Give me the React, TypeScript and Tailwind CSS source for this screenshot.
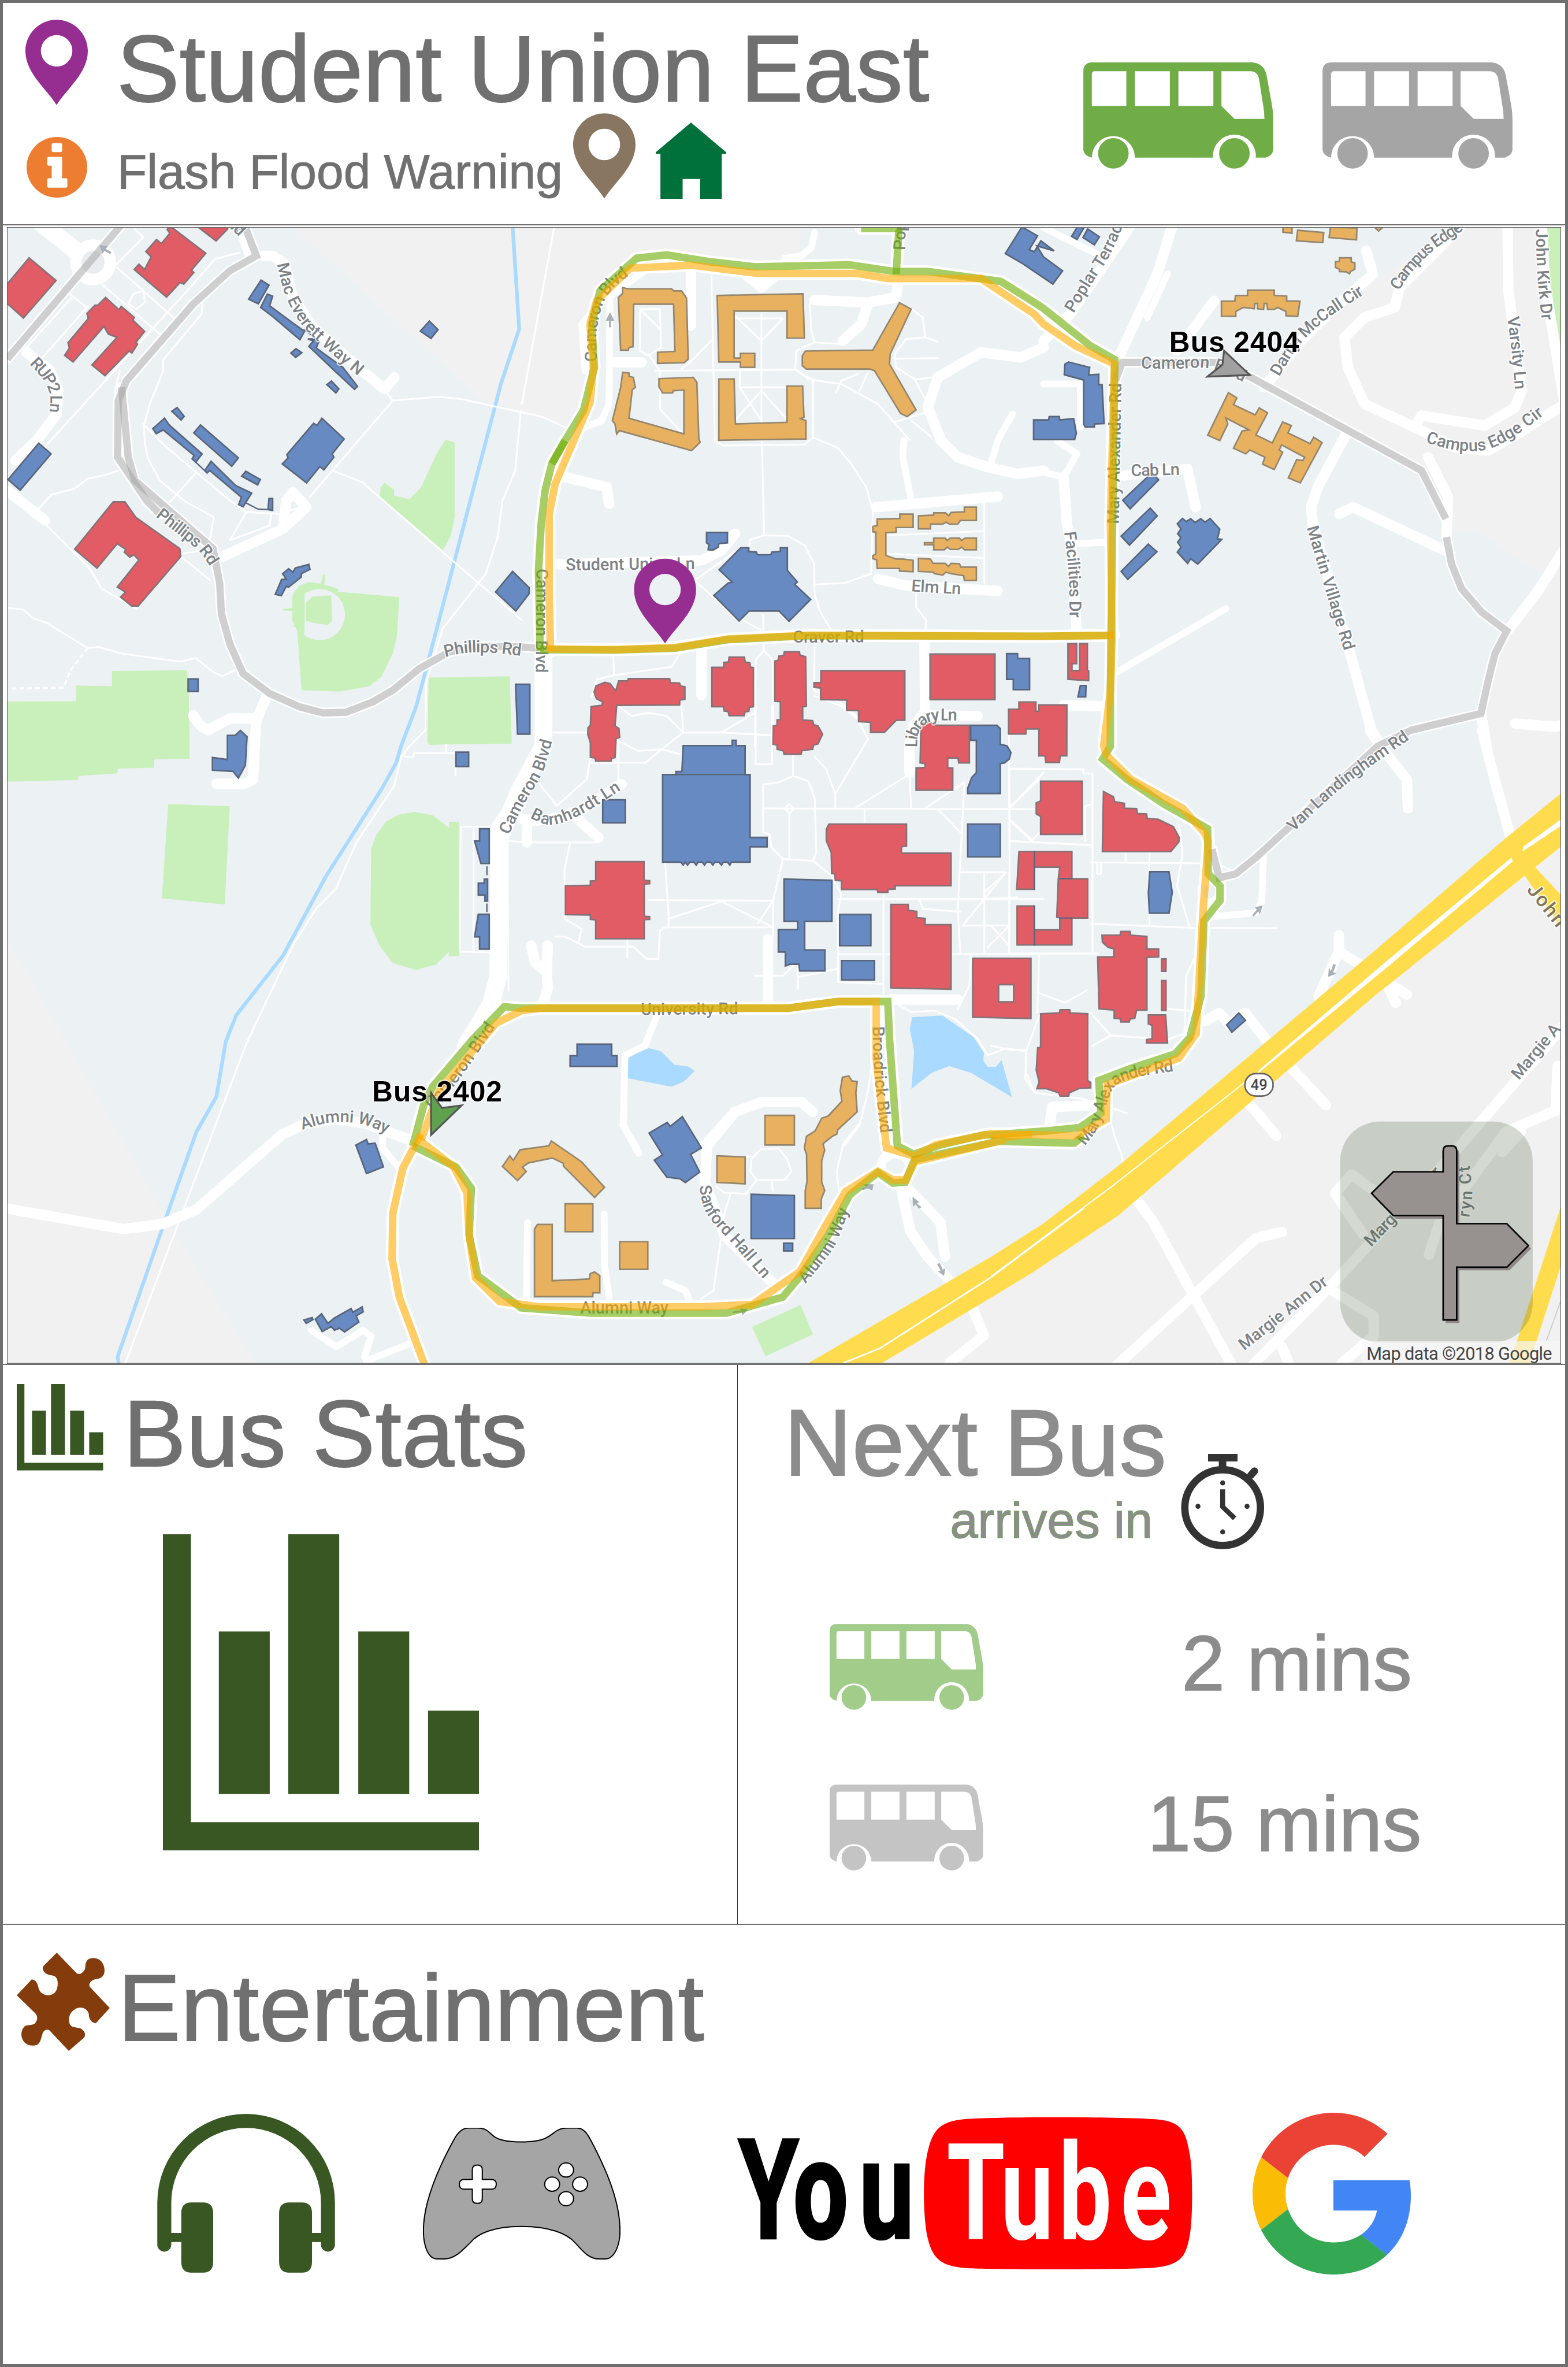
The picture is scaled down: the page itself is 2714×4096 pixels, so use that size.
import React from "react";

/* ---------- Map geometry helpers ---------- */

// Each survey sheet has its own origin and unit size on the map plane.
type Sheet = "A" | "B" | "C" | "D" | "E" | "F" | "G";
const SHEETS: Record<Sheet, [number, number, number, number]> = {
  A: [0, 430, 0.63776, 0.63776],
  B: [1000, 430, 0.63776, 0.63776],
  C: [2000, 430, 0.64094, 0.63776],
  D: [0, 1400, 0.63776, 0.78444],
  E: [1000, 1200, 0.63776, 0.63776],
  F: [1900, 1400, 0.70472, 0.78444],
  G: [700, 2000, 0.82908, 0.40816],
};

type Pt = [number, number];

// "B 10,20 30,40 C 5,6" -> points on the map plane; a letter switches sheet.
function toPoints(src: string): Pt[] {
  let s: Sheet = "A";
  const out: Pt[] = [];
  for (const tok of src.trim().split(/\s+/)) {
    if (tok in SHEETS) {
      s = tok as Sheet;
      continue;
    }
    const [x, y] = tok.split(",").map(Number);
    const [ox, oy, kx, ky] = SHEETS[s];
    out.push([ox + x * kx, oy + y * ky]);
  }
  return out;
}
const str = (src: string) =>
  toPoints(src)
    .map(([x, y]) => `${x.toFixed(1)},${y.toFixed(1)}`)
    .join(" ");

const Lines = ({ data, width, color, opacity = 1, join = "round" }: { data: string[]; width: number; color: string; opacity?: number; join?: "round" | "miter" }) => (
  <g fill="none" stroke={color} strokeWidth={width} strokeLinejoin={join} strokeLinecap={join === "round" ? "round" : "butt"}>
    {data.map((d, i) => (
      <polyline key={i} points={str(d)} strokeOpacity={opacity} />
    ))}
  </g>
);

const Areas = ({ data, fill, outline }: { data: string[]; fill: string; outline?: string }) => (
  <g fill={fill} stroke={outline ?? "none"} strokeWidth={outline ? 3 : 0}>
    {data.map((d, i) => (
      <polygon key={i} points={str(d)} />
    ))}
  </g>
);

// Smooth a polyline into a path so that street names bend gently.
function smooth(p: Pt[]) {
  let d = `M${p[0][0]} ${p[0][1]}`;
  for (let i = 0; i < p.length - 1; i++) {
    const a = p[i - 1] ?? p[i];
    const b = p[i];
    const c = p[i + 1];
    const e = p[i + 2] ?? c;
    d += `C${b[0] + (c[0] - a[0]) / 6} ${b[1] + (c[1] - a[1]) / 6} ${c[0] - (e[0] - b[0]) / 6} ${c[1] - (e[1] - b[1]) / 6} ${c[0]} ${c[1]}`;
  }
  return d;
}

/* ---------- Map data ---------- */

const OUTSIDE = [
  "B -688,9 -118,530 0,563 130,608 220,430 200,250 330,110 440,90 700,120 835,130 835,9",
  "D 21,510 530,1235 770,1548 21,1548",
  "C 1240,9 1000,160 830,300 670,490 1130,740 1205,900 1215,922 1300,922 1480,1045 1530,1065 1385,1225 1310,1470 1330,1568 1568,1568 1568,9",
  "F 1335,0 1415,270 350,1100 0,1310 -503,1548 1568,1548 1568,0",
];

const PARKS = [
  "A 1338,648 1366,654 1366,880 1355,935 1331,980 1141,818 1144,790 1155,777 1184,797 1184,815 1231,826 1265,790 1312,690",
  "A 877,1140 880,1110 900,1085 930,1075 964,1080 970,1052 977,1054 974,1083 1018,1096 1015,1104 1200,1120 1192,1240 1180,1290 1145,1360 1110,1388 1020,1404 906,1400 892,1210 883,1210 878,1162 850,1160 850,1156 878,1153",
  "A 21,1434 228,1433 228,1386 336,1388 336,1342 562,1340 567,1410 569,1568 21,1568",
  "D 21,0 569,0 569,69 463,71 463,91 354,93 352,105 235,111 235,121 21,125",
  "D 505,180 690,185 675,425 486,410",
  "A 1288,1362 1532,1358 1537,1560 1290,1564 1284,1555",
  "D 1284,0 1537,0 1537,32 1290,34",
  "D 1115,290 1130,255 1160,222 1200,205 1245,199 1300,207 1350,238 1348,223 1379,223 1379,551 1348,551 1348,541 1310,572 1250,585 1180,568 1140,525 1113,475",
  "C 1506,9 1547,9 1547,378 1538,378 1515,180",
  "G 1006,1227 1035,1365 925,1468 894,1330",
];
const WATER = [
  "E 320,1293 382,1268 418,1277 458,1318 500,1323 519,1337 487,1368 450,1384 317,1358",
  "E 1173,1175 1264,1170 1358,1235 1389,1283 1387,1306 1400,1324 1425,1324 1442,1304 1473,1415 1350,1342 1284,1322 1230,1343 1171,1391 1179,1277 1166,1210",
];
const CREEK = [
  "A 1540,5 1560,315 1505,480 1400,880 1290,1300 1250,1450 1205,1568 D 1190,80 1145,145 980,355 850,550 710,695 678,760 650,895 590,980 490,1210 353,1530 357,1548",
];

const PATHS = [
  "A 1150,490 1180,530 930,820", "A 1180,530 1320,518 1390,526 1568,565 B 60,578 130,610",
  "A 1565,560 1548,740 1510,830 1495,940 1460,1050 1330,1215 1280,1380 1278,1520 1230,1568 D 1205,65 1185,135 1070,275 1010,385 950,435 880,525 740,765 375,1548",
  "A 1003,742 1088,775 1440,1080 1568,1190", "A 720,85 645,105 580,180 70,740",
  "A 340,120 520,280", "A 300,175 480,330", "A 350,120 430,40 400,9", "A 210,210 260,250", "A 400,210 430,200 435,235 410,255 385,240 400,210",
  "A 610,225 605,270 490,408 490,440 450,540 432,605 435,660 445,705 480,770 555,832 642,880 630,950", "A 430,600 500,670 690,830 740,865 840,870 905,850",
  "A 590,745 510,835", "A 740,865 690,950 810,905 815,870", "A 355,740 320,752 262,765 222,795 155,812 110,860",
  "A 130,895 270,1035 305,1095 410,1155 545,990 640,975", "A 545,1000 632,1070", "A 21,1152 70,1158 98,1183 140,1198 262,1273 295,1270 365,1290 540,1314 588,1304 640,1345 668,1358 705,1340",
  "A 220,215 75,375", "A 265,245 110,420", "A 360,440 345,500 360,620",
  "B 97,9 0,540", "B 570,155 580,650 605,665 850,662 875,640 875,470", "B 720,270 720,580 728,935", "B 400,440 820,437 875,468 960,480 1070,540 1165,648",
  "B 875,640 950,672 990,720 1035,790 1055,860 1050,1050 970,1078 880,1082", "B 635,270 720,350 785,283 635,283", "B 655,440 655,490 820,490", "B 655,490 720,590", "B 720,500 640,590",
  "B 720,500 800,590", "B 355,255 415,255 418,370 380,395 355,380 355,255 418,318", "B 380,390 415,440 415,555 480,625", "B 480,435 500,420 575,345", "B 865,235 870,320 880,355 825,380 822,435 860,465",
  "B 880,355 960,360", "B 1165,250 1205,280 1213,340 1155,345 1120,390 1125,430 1180,465 1215,530", "B 1213,340 1250,353", "B 1125,404 1250,402", "B 1180,467 1230,460", "B 1040,445 1015,500", "B 945,505 960,470 1010,450", "B 1120,595 1230,560", "B 1170,590 1230,638",
  "B 728,935 685,948 683,975", "B 728,935 800,936 850,965 878,1020 880,1110 895,1160 930,1220", "B 640,985 520,1070 650,1190", "B 1390,840 1390,1080", "B 1100,935 1390,922", "B 1100,990 1390,1003",
  "B 1185,1110 1185,1150 1215,1190 1213,1225", "B 725,1175 727,1280 755,1310 755,1568", "B 727,1280 703,1310 700,1568", "B 275,1300 277,1355 225,1368 210,1420", "B 277,1355 450,1330 475,1290",
  "B 665,1190 720,1220", "B 880,1270 878,1400 960,1440 1035,1500",
  "E 95,320 195,320", "E 290,240 330,270 380,260 435,270 485,320 420,370 350,375 290,345", "E 485,320 480,240", "E 485,320 600,320 700,260", "E 600,320 750,328", "E 290,350 290,470", "E 372,410 420,370 475,385", "E 210,410 372,410",
  "E 703,240 703,415 752,415 752,240", "E 880,210 960,240 1010,280 1040,340 942,505 942,545", "E 880,392 915,430 942,505", "E 815,390 815,450 770,470 725,475 725,620 745,625 750,665 785,700", "E 815,450 860,465 880,515 885,680 875,705 785,700", "E 725,548 1568,550",
  "E 804,535 818,548 804,562 790,548 804,535", "E 804,562 804,700", "E 875,705 930,750 960,805 950,860 950,1070 1085,1075", "E 785,700 755,825 755,930", "E 755,825 710,893", "E 755,825 380,823", "E 440,880 600,827 755,905", "E 755,905 430,905 415,915 410,1000 375,1000 335,963 190,963 130,933 100,933",
  "E 430,700 442,880 440,905", "E 145,650 128,735 130,880 180,910 170,950", "E 0,650 225,650", "E 317,940 317,995", "E 950,820 1568,820", "E 950,986 1568,985", "E 1087,810 1087,1110", "E 1195,820 1205,850 1318,858", "E 1030,550 1030,590", "E 1005,545 1165,445 1170,545", "E 1215,545 1330,470 1310,850 1318,985", "E 1250,550 1318,620",
  "E 1318,740 1455,740 1325,900 1465,900", "E 1390,740 1390,985", "E 1390,800 1455,740", "E 1465,740 1465,985", "E 1410,900 1465,960", "E 1465,900 1400,965", "E 1465,430 1465,670", "E 1465,548 1568,440", "E 1465,430 1568,430", "E 1465,580 1530,640", "E 700,1050 785,1050 828,1010 830,1090", "E 830,1055 945,1030", "E 1085,1110 1170,1160 1240,1155 1300,1180 1370,1240 1400,1290 1455,1268 1510,1277", "E 1350,990 1345,1080 1310,1150", "E 1555,1170 1515,1280 1515,1340 1540,1400", "E 1055,1300 1040,1400 1015,1500 970,1560", "E 50,470 105,540 195,460 205,400",
  "F 48,0 48,110 50,270 270,280", "F 48,93 250,95 250,105 275,105 275,540", "F 48,190 130,120", "F 50,220 110,270 130,250", "F 0,410 70,408", "F 50,270 48,545 290,545", "F 130,545 125,690", "F 270,322 610,325 650,340", "F 270,472 545,482 775,483", "F 255,270 255,185 275,180", "F 430,300 430,345", "F 430,450 430,475", "F 365,300 365,322", "F 510,230 520,300 505,380 540,480", "F 288,325 288,350 298,350 298,325", "F 125,640 200,665 260,635", "F 270,690 325,745 480,755 525,740 530,600 550,560", "F 275,770 325,745", "F 95,780 92,850 120,885 250,900 370,935", "F 320,940 335,990 355,1040 362,1075", "F 480,680 540,685", "F 0,770 50,780 95,780",
  "D 1385,235 1470,235", "D 1384,235 1382,540 1470,542", "D 1423,235 1423,540", "D 1205,62 1240,66 1245,55 1370,55 1368,110", "D 1340,35 1340,55", "D 1525,270 1568,272", "D 1525,270 1528,635",
  "G 915,495 955,492 975,540 985,600 970,640 905,640 890,600 893,540 915,495", "G 893,530 880,530", "G 845,700 830,800 805,1160 775,1200", "G 940,650 942,690", "G 905,640 880,705 830,700 810,670", "G 1095,690 1090,600 1105,470 1140,380",
];

const NARROW = [
  "B 265,200 262,540 240,590 190,610", "B 370,140 230,240 180,300 190,440", "C 310,280 370,150", "C 0,480 110,480 110,610", "C 100,960 190,955", "C 220,1345 545,1155", "F 740,310 735,420 720,445 600,455",
  "C 0,745 60,760 100,690 40,650", "B 1475,570 1430,650 1410,720", "B 1148,650 1145,700 1170,830", "B 880,25 870,70 840,95 790,102", "E 410,1160 370,1260 310,1290 305,1500 345,1568 G 595,380 632,515",
  "G 375,840 372,1220", "G 552,800 553,1040 565,1210", "G 695,1120 740,1160 750,1210", "D 1150,990 1150,1020 1200,1070", "D 935,1465 1010,1505 1090,1465 1115,1480 1095,1530", "D 1240,1495 1100,1540", "C 0,10 160,90", "E 1165,440 1170,300 1212,250",
];

const ROADS = [
  "A 80,385 150,440 175,500 170,570 110,650 45,710", "A 21,800 135,890", "A 720,9 750,90", "A 790,95 820,95 855,120 880,220 940,310 1100,450 1155,495 1185,460",
  "A 665,1000 850,915 920,850 880,805 860,830 850,910", "A 580,1475 600,1505 625,1520 690,1485 770,1485 765,1568 D 760,120 735,130 650,130", "A 770,1490 800,1420",
  "D 21,1168 370,1218 490,1205 590,1170 850,985 920,960 1010,950 1100,960 1230,1000",
  "B 280,415 360,415", "B 508,140 508,305", "B 130,760 255,790 262,840", "B 110,1022 540,1010 600,980 640,930", "B 880,228 1040,235 1125,220 1130,180", "B 1040,240 1020,300 965,350",
  "B 1568,370 1500,400 1380,385 1250,460 1220,550 1260,650 1310,700 1400,730 1490,750 1568,740", "B 1065,850 1430,818", "B 1070,1065 1150,1085 1430,1102", "B 540,1280 540,1415", "B 1210,1250 1212,1460", "B 1212,1475 1370,1478", "B 660,140 720,190 780,140",
  "C 385,5 340,150 225,400", "C 260,5 80,270 0,350", "C 510,230 400,380", "C 660,490 770,350 850,270 985,150 965,80", "C 1245,10 1065,190 1050,250 960,280 900,340 910,430 960,540 1110,610 1230,670 1330,680 1400,640 1568,535",
  "C 1110,610 1130,575 1320,605 1410,550 1430,500 1390,200 1388,5", "C 1490,5 1500,180 1568,600", "C 905,630 820,790 800,850 805,900 920,1300 980,1520 1010,1568", "C 885,870 925,850 1200,980",
  "C 240,755 430,735 455,850", "C 60,760 70,900 85,980 100,1240", "C 60,1445 180,1448", "C 1385,1225 1480,1100 1568,960", "C 1310,1480 1325,1568", "C 1410,1500 1530,1510 1568,1500", "C 1150,700 1210,820 1205,940",
  "F 1335,0 1360,90 1415,270", "F 1030,0 1060,40 1130,120 1133,190", "F 945,500 945,540 890,650", "F 945,540 1000,570 1130,645", "F 1060,590 1100,665", "F 580,710 620,690 650,720 690,690 760,770 910,915", "F 690,900 775,990", "F 390,1140 440,1200 660,1560",
  "F 330,1560 720,1240 790,1225", "F 700,1560 930,1350 1250,1040 1568,710", "F 1190,1280 1220,1200 1400,980 1568,915", "F 1110,1170 980,1085 935,1130 1010,1230", "F 1390,1030 1440,980", "F 1535,930 1540,820", "F 930,1370 1040,1430 1040,1480 950,1548", "F 790,1505 810,1548", "F 155,990 165,920 290,915",
  "E 150,560 190,600 230,635", "E 740,940 740,1130", "E 1110,1122 1310,1122", "E 28,960 40,1010 75,1040 78,960", "E 75,1040 78,1090 65,1130", "E 550,1560 640,1460 720,1430 840,1430 875,1460", "E -20,575 40,585 150,570 300,475", "E 15,590 15,650", "E 1165,440 1165,350",
  "G 845,345 790,480 785,650 830,900 950,1140", "G 1235,640 1260,880 1300,1000 1400,1220 1430,1370 1350,1500", "G 1240,650 1330,840 1340,1000",
];
const WIDE = ["E 65,80 65,360 -10,500 -68,640", "D 1560,170 1500,240 1497,600 1475,670 1400,770", "A 90,-30 240,90"];

const GREY = [
  "A 370,-5 21,405",
  "A 735,5 770,95 690,140 580,240 380,470 355,530 353,700 440,830 480,870",
  "A 365,490 385,700 405,770 640,975 660,1080 665,1170 690,1260 730,1350 810,1410 900,1450 970,1468 1040,1466 1120,1435 1180,1400 1260,1335 1350,1285 1450,1268 1568,1270 B 80,1277",
  "C 215,470 235,415 520,415 620,460 1130,740 1203,885",
  "C 1205,940 1220,1020 1250,1095 1310,1165 1385,1222 1350,1290 1330,1370 1308,1470 1100,1520 1000,1568 F 720,310 665,350 620,360 600,290",
];

const GREEN = [
  "B 1020,13 1143,13", "B 1133,18 1125,150",
  "B 55,1283 50,1040 58,900 70,800 90,720 130,650 185,560 218,430 210,300 235,200 345,102 435,92 560,112 700,128 985,122 1120,142 1220,142 1440,172 1540,235 C 0,253 140,365 213,407 205,1000 200,1400 200,1568 F 303,70 370,120 470,180 540,215 588,240 590,350 622,380 622,415 578,465 570,650 540,750 500,790 380,825 292,855 298,935 240,970 150,978 0,988 G 1430,428 1330,475 1268,520 1230,480 E 1105,1240 1100,1128 950,1128 800,1148 0,1148 D 1515,675 1420,755 1300,870 1275,910 1240,1015",
  "F 250,990 225,1008 0,1003 G 1460,460 1270,545 1248,650 1220,655 1185,605 1120,710 1070,900 1010,1080 965,1190 835,1265 520,1265 360,1240 260,1090 240,900 245,680 210,580 110,480",
  "B 55,1278 280,1279 460,1274 620,1248 860,1236 C 0,1238 210,1235",
  "B 90,720 130,650",
];
const ORANGE = [
  "B 86,1283 82,1100 82,870 100,780 205,535 215,430 205,300 225,230 325,132 510,123 710,148 1010,148 1100,163 1380,163 1540,270 C 0,300 95,365 212,420 200,900 205,1240 200,1400 180,1568 F 313,60 380,120 520,190 580,250 590,270 575,450 557,740 510,800 315,865 312,950 230,990 0,985 G 1440,425 1320,475 1268,528 1205,490 E 1065,1300 1065,1128 950,1128 800,1148 60,1148 0,1155 D 1490,715 1320,880 1265,1000",
  "F 110,986 0,998 G 1480,450 1270,555 1250,640 1220,640 1185,600 1110,695 1060,870 1005,1070 895,1225 780,1235 400,1235 310,1210 255,1100 240,900 235,700 205,580 120,445",
  "B 75,1276 280,1278 460,1272 620,1246 860,1235 C 0,1238 210,1235",
  "D 1265,985 1210,1070 1180,1180 1178,1290 1200,1385 1275,1548",
];

const RED = [
  "A 87,101 168,169 70,282 21,238 21,180", "A 510,5 618,87 575,138 582,145 552,180 541,175 500,219 403,136 417,120 434,136 454,98 438,82 470,46 485,58 510,27 502,16", "A 590,5 680,9 684,14 649,50",
  "A 317,220 357,257 364,247 403,280 399,288 434,322 408,355 413,360 396,387 387,381 315,455 276,423 351,340 325,330 312,307 219,414 194,394 208,372 204,356 265,283 261,268 285,243 294,243",
  "A 340,834 375,834 407,880 540,975 543,998 415,1147 395,1147 362,1120 377,1105 352,1090 417,1009 402,993 390,1000 373,985 378,977 352,960 291,1033 224,976",
  "E 250,169 265,173 282,195 291,165 318,165 320,158 444,158 446,170 474,171 477,180 490,182 490,220 475,222 474,237 285,238 280,300 292,308 294,334 283,338 280,395 270,397 268,406 222,406 220,396 206,394 206,350 198,325 199,305 206,298 208,242 240,238 243,228 224,218 217,198 223,180",
  "E 623,93 669,93 671,108 685,110 687,123 696,125 696,242 684,244 682,256 671,258 668,269 623,269 620,257 608,255 606,242 571,242 571,124 607,124 607,109 621,108",
  "E 789,77 834,77 836,87 853,92 855,241 844,243 844,282 874,284 877,296 890,300 904,325 890,354 877,357 874,370 842,374 839,385 788,385 786,375 767,370 767,357 755,355 756,300 767,298 767,282 777,281 777,227 760,226 760,105 771,102 773,90 787,88",
  "E 899,134 1151,134 1151,283 1125,283 1090,319 1048,319 1048,289 1012,287 1012,254 976,253 976,222 898,221 898,186 878,184 878,170 899,170", "E 1227,84 1422,84 1422,221 1227,221",
  "E 1200,290 1242,290 1245,298 1345,298 1345,411 1313,411 1311,396 1280,396 1280,426 1295,426 1295,493 1185,493 1185,426 1212,425 1212,413 1197,411",
  "E 1494,228 1545,228 1545,256 1554,256 1554,237 1638,237 F 205,62 187,62 185,78 148,78 146,62 130,62 E 1554,390 1554,309 1515,309 1515,324 1463,324 1463,250 1494,250",
  "E 923,595 1156,595 1156,661 1141,663 1141,682 1290,682 1290,780 1122,780 1122,790 1100,791 1100,800 1070,800 1068,791 961,791 961,765 942,764 941,745 931,743 930,680 915,645 915,610",
  "E 222,708 367,708 367,764 384,765 384,774 368,775 368,872 384,873 384,881 368,882 368,939 222,939 222,883 206,881 206,868 131,867 131,780 206,779 206,766 222,765",
  "E 1109,836 1161,836 1162,854 1187,857 1187,876 1212,878 1212,897 1290,897 1290,1091 1109,1087",
  "F 134,124 247,124 247,254 134,254 134,210 122,204 122,177 134,172",
  "F 305,149 332,162 335,174 362,178 362,190 395,191 397,203 422,204 424,215 454,217 495,235 511,262 510,272 488,296 302,296",
  "F 75,296 219,296 219,362 262,362 262,458 219,458 219,524 70,524 70,429 117,429 117,487 186,487 186,458 178,456 182,362 186,334 117,334 117,388 69,388",
  "F 301,500 350,500 352,491 377,491 379,500 423,503 423,534 455,534 455,553 423,554 423,683 395,683 390,703 377,705 375,712 352,712 350,704 334,703 334,683 293,680 289,553 333,553 333,533 318,530 302,517",
  "F 463,558 475,558 475,588 463,588", "F 463,611 475,611 475,684 463,684", "F 427,695 474,695 479,763 422,763 422,755 437,753 437,720 427,717",
  "F 134,692 185,690 187,682 213,682 215,690 262,692 262,855 270,860 270,873 240,874 212,885 210,893 187,893 183,885 150,875 124,875 130,858 122,830 126,775 134,774",
  "C 73,1260 99,1260 99,1320 85,1320 85,1341 108,1341 108,1260 131,1260 131,1340 135,1342 135,1371 73,1367",
];
const BLUE = [
  "A 784,168 808,183 776,239 747,225", "A 803,210 819,216 810,245 909,318 917,318 901,347 820,278 783,250", "A 925,345 952,345 958,352 950,372 1030,430 1074,487 1065,496 1010,445 928,367 942,350", "A 889,374 907,386 888,400 874,387", "A 996,471 1018,495 1009,507 982,482", "A 1290,291 1316,317 1295,343 1263,321",
  "A 532,551 553,577 544,588 516,562", "A 494,583 508,603 607,690 588,715 577,705 583,695 490,618 469,629 459,614", "A 602,603 716,702 696,727 582,627", "A 634,712 650,728 708,785 756,808 730,849 717,842 725,820 630,740 622,747 615,740", "A 738,742 782,767 774,783 726,757", "A 808,824 819,824 819,860 805,857",
  "A 967,583 1034,645 998,690 1003,700 973,738 961,728 921,777 848,720 865,702 862,692 942,598 952,605", "A 116,658 153,690 60,799 24,767", "A 928,1022 931,1037 905,1050 905,1060 867,1090 860,1088 845,1116 827,1112 846,1067 860,1067 849,1050 867,1035 880,1045 887,1033", "A 1540,1043 1590,1092 B 22,1110 A 1550,1162 1489,1105", "A 565,1366 595,1366 595,1404 565,1404", "D 683,12 706,12 722,0 742,15 737,85 716,116 700,100 638,97 638,66 683,71", "A 1549,1382 B 24,1382 24,1532 A 1555,1532", "D 1370,53 1408,53 1408,88 1370,88",
  "D 1441,240 1470,240 1470,325 1445,325 1426,270 1441,270", "D 1437,373 1455,373 1455,363 1465,363 1465,417 1457,417 1457,402 1437,402", "D 1437,449 1470,449 1470,534 1441,534 1441,504 1426,504",
  "B 1503,8 1550,35 1525,76 1540,83 1560,50 1600,80 C -20,65 0,98 57,140 28,180 -60,120 B 1453,88", "C 103,5 120,12 100,46 84,36", "C 132,14 167,38 152,62 118,40", "B 555,926 618,926 618,957 592,960 590,970 575,979 560,978 562,962 555,957",
  "B 658,972 682,972 682,983 705,985 708,993 748,993 752,985 777,983 777,972 798,972 798,1040 828,1075 820,1082 868,1127 803,1193 773,1162 683,1162 653,1192 577,1115 620,1078 632,1075 593,1038",
  "B 1538,588 C 15,588 17,578 47,578 48,588 90,584 98,628 93,647 B 1538,647", "C 75,414 138,430 135,453 165,451 165,482 175,482 181,599 152,600 152,609 125,609 120,600 120,468 62,452 64,420",
  "C 325,746 344,768 259,855 237,829", "C 319,853 340,876 257,964 232,937", "C 313,961 339,984 252,1067 232,1043", "C 415,884 427,893 440,885 453,896 470,885 483,895 498,884 527,916 520,945 533,947 461,1021 440,1005 431,1019 400,985 411,970 401,955 411,942 401,930 411,915 400,900",
  "E 1457,83 1490,83 1490,97 1526,97 1526,191 1477,191 1477,160 1457,160", "C 110,1386 127,1386 126,1420 103,1420", "E 485,359 632,359 632,343 644,343 644,359 671,359 671,446 686,446 686,635 737,635 737,663 686,663 686,709 630,709 625,718 618,709 606,709 600,718 592,709 580,709 574,718 567,709 555,709 549,718 542,709 530,709 524,718 517,709 505,709 498,718 491,709 485,718 478,709 423,709 423,446 463,446 463,437 481,437",
  "E 243,522 311,522 311,591 243,591", "E 1349,298 1428,298 1438,308 1438,355 1458,360 1470,380 1465,400 1450,411 1438,413 1438,503 1340,503 1340,487 1352,455 1366,440 1366,343 1349,343", "E 1340,595 1438,595 1438,693 1340,693",
  "E 788,760 932,764 932,887 850,887 850,973 911,973 911,1036 835,1036 833,1016 805,1016 792,1021 792,979 771,979 771,912 829,912 829,887 788,887", "E 955,866 1049,866 1049,960 955,960", "E 961,1005 1060,1005 1060,1063 961,1063", "E 166,1256 270,1256 270,1291 286,1291 286,1323 145,1323 145,1291 166,1291",
  "G 733,343 777,490 752,520 773,603 740,652 728,635 697,627 668,547 687,522 656,420 698,370 705,388", "G 892,707 992,713 992,915 892,915", "G 967,937 988,937 988,973 967,973", "D 1101,999 1106,1010 1127,1008 1152,1066 1101,1082 1069,1013",
  "D 966,1425 985,1448 1005,1435 1055,1412 1060,1421 1088,1408 1091,1420 1070,1430 1078,1445 1035,1469 1020,1460 1005,1465 995,1456 968,1468 947,1438", "D 913,1440 938,1434 940,1439 920,1448", "F 431,345 483,345 492,395 483,446 430,446 427,397", "F 673,690 691,708 654,737 640,719",
];
const TAN = [
  "B 303,190 318,194 450,194 456,200 480,200 495,222 500,405 488,416 408,418 408,385 460,382 456,240 336,240 334,368 322,370 320,378 297,378 290,220 303,208", "B 587,214 845,209 849,342 797,342 797,261 638,261 638,402 657,402 657,388 700,388 700,430 657,430 657,414 592,414", "B 1135,236 1170,255 1107,390 1105,420 1185,558 1158,578 1138,568 1060,440 1045,435 855,435 843,425 843,395 852,381 1055,378",
  "B 303,445 322,447 322,457 335,460 341,490 332,497 322,583 487,630 487,498 455,500 453,507 423,507 412,488 412,464 515,460 526,475 532,645 536,655 510,680 293,620 285,630 280,600 272,590 297,490", "B 592,465 638,465 642,600 797,595 797,486 844,486 848,580 838,584 854,590 854,645 592,649",
  "B 1068,886 1136,884 1136,871 1176,871 1176,911 1125,911 1125,925 1094,927 1094,995 1125,1006 1145,1006 1176,1010 1176,1044 1135,1042 1135,1034 1068,1034 1066,1008 1055,1005 1055,996 1064,990 1064,925 1055,924 1055,908 1068,906",
  "B 1192,876 1238,874 1238,867 1273,867 1283,876 1290,866 1330,864 1330,850 1366,850 1366,890 1318,890 1310,901 1285,901 1275,895 1265,901 1228,901 1228,915 1192,915", "B 1210,957 1238,957 1238,943 1272,943 1278,950 1288,943 1315,943 1322,950 1332,943 1366,943 1366,978 1330,978 1322,970 1312,977 1288,977 1278,970 1270,978 1238,978 1238,963 1210,963", "B 1192,1004 1228,1006 1236,1019 1272,1019 1282,1028 1290,1019 1315,1020 1320,1030 1366,1030 1366,1070 1330,1070 1328,1056 1290,1050 1275,1045 1265,1054 1240,1050 1236,1045 1192,1043",
  "C 610,198 690,198 690,214 727,216 727,230 767,231 760,277 725,275 725,262 700,250 690,256 670,256 668,238 660,238 658,256 640,254 640,238 632,238 630,254 597,250 575,262 575,277 532,276 532,231 572,231 574,214 610,214",
  "C 553,506 578,522 568,542 633,573 645,552 670,567 635,633 684,657 715,594 741,605 731,627 797,659 808,640 833,656 768,777 732,762 757,707 775,710 781,700 712,663 705,678 715,685 690,737 655,721 662,700 617,678 605,690 568,673 594,621 615,618 545,582 551,600 527,650 491,634",
  "C 716,9 743,9 743,27 716,24", "C 760,18 838,25 835,55 756,50", "C 858,9 937,11 936,47 854,40", "C 885,101 920,101 920,113 931,116 931,135 918,142 915,149 905,143 885,142 885,135 873,130 873,112 885,112", "C 990,9 1015,9 1002,20",
  "G 334,527 342,548 358,498 424,480 430,457 500,555 553,675 530,722 458,575 458,562 432,537 377,560 363,580 372,600 352,643 317,577", "G 462,752 526,752 526,883 462,883", "G 588,930 653,930 653,1060 588,1060", "G 398,849 432,849 432,1113 518,1105 520,1080 530,1072 542,1090 542,1170 526,1170 526,1188 391,1188 391,870",
  "G 924,337 992,337 992,476 924,476", "G 813,527 878,532 878,658 813,652", "G 1103,158 1118,152 1125,175 1137,178 1134,230 1137,320 1092,405 1090,425 1080,435 1058,470 1062,500 1055,550 1055,650 1062,690 1054,730 1054,773 1017,773 1017,690 1021,650 1020,520 1015,490 1020,435 1040,410 1055,350 1070,340 1102,270 1098,220",
];

const LABELS: [string, string, number?, string?][] = [
  ["Mac Everett Way N", "A 832,120 858,215 905,300 975,370 1078,458"],
  ["RUP2 Ln", "A 88,420 130,468 150,515 148,568"],
  ["Phillips Rd", "A 467,878 550,943 600,985 632,1030"],
  ["Phillips Rd", "A 1338,1300 1400,1288 1470,1287 1568,1297"],
  ["Rd", "A 690,10 720,40"],
  ["Cameron Blvd", "B 226,412 224,330 242,245 275,192 325,152"],
  ["Cameron Blvd", "B 44,1035 42,1350"],
  ["Student Union Ln", "B 132,1040 523,1036"],
  ["Elm Ln", "B 1170,1103 1322,1112"],
  ["Craver Rd", "B 815,1257 1032,1256"],
  ["Pop", "B 1152,78 1154,-10"],
  ["Poplar Terrace", "C 90,268 150,170 200,90 248,-20"],
  ["Cameron Blvd", "C 292,434 400,434 500,434 600,475"],
  ["Darryl McCall Cir", "C 705,458 760,370 840,290 962,208"],
  ["Campus Edge", "C 1063,200 1100,145 1170,75 1260,15"],
  ["John Kirk Dr", "C 1472,15 1477,150 1490,292"],
  ["Varsity Ln", "C 1387,280 1402,400 1410,500"],
  ["Campus Edge Cir", "C 1142,655 1230,678 1320,678 1400,642 1500,570"],
  ["Martin Village Rd", "C 787,912 840,1090 900,1285"],
  ["Facilities Dr", "C 62,925 75,1050 78,1185"],
  ["Mary Alexander Rd", "C 225,900 233,475"],
  ["Cab Ln", "C 262,757 410,753"],
  ["Van Landingham Rd", "F 822,248 960,135 1140,20"],
  ["Mary Alexander Rd", "F 255,1015 290,970 312,915 338,868 400,846 500,832"],
  ["Margie A", "F 1435,855 1552,728"],
  ["Margie Ann Dr", "F 688,1515 920,1350"],
  ["Margie Ann Dr", "F 1033,1262 1228,1080"],
  ["ryn Ct", "F 1300,1190 1308,1130 1300,1060"],
  ["John", "F 1455,390 1540,485", 38, "#80755a"],
  ["Alumni Way", "D 908,975 990,958 1080,960 1165,985"],
  ["Cameron Blvd", "E -40,628 10,530 62,440 92,342"],
  ["Cameron Blvd", "D 1295,925 1375,858 1490,722"],
  ["Alumni Way", "G 1018,1128 1085,950 1118,775"],
  ["Alumni Way", "G 497,1268 703,1268"],
  ["Sanford Hall Ln", "G 772,668 790,800 860,965 922,1110"],
  ["Broadrick Blvd", "E 1054,1203 1060,1350 1078,1527"],
  ["University Rd", "E 358,1168 653,1166"],
  ["Barnhardt Ln", "E 24,576 90,597 180,565 302,490"],
  ["Library Ln", "E 1188,364 1191,325 1210,297 1243,284 1312,284"],
];

const ARROWS = ["F 738,427 730,450 726,442 712,455 710,450 722,438 716,432", "F 916,602 918,580 924,587 930,570 937,573 930,590 938,594", "B 265,264 278,290 268,290 268,310 262,310 262,290 252,290", "A 298,62 322,66 318,74 335,84 330,90 314,80 308,88", "G 1175,660 1172,690 1163,680 1150,688 1148,680 1158,672 1150,660", "G 1265,718 1281,745 1275,750 1286,768 1280,775 1272,755 1266,765", "G 1338,1090 1324,1070 1330,1066 1322,1035 1328,1030 1335,1060 1341,1055", "G 885,1250 872,1275 870,1262 850,1265 850,1258 868,1252 866,1240"];

const SIGN = "M2766 2206Q2766 2196 2775 2196H2783Q2792 2196 2792 2206V2345H2888L2929.500 2387L2888 2428.500H2792V2529.500H2766V2329.500H2670.300L2628.700 2287L2670.300 2245.600H2766Z";

function CampusMap() {
  const roads = [...ROADS, ...GREY];
  return (
    <svg className="block h-full w-full" viewBox="13 435.5 2979 2178" preserveAspectRatio="none" role="img" aria-label="Campus bus map">
      <rect x="0" y="420" width="3010" height="2210" fill="#ecf1f4" />
      <Areas data={OUTSIDE} fill="#f1f1f1" />
      <Areas data={PARKS} fill="#c9f0bb" />
      <circle cx={612} cy={1178} r={49} fill="#ecf1f4" />
      <polygon points={str("A 940,1118 995,1115 998,1190 985,1204 940,1198 918,1190 918,1140")} fill="#c9f0bb" />
      <polygon points={str("A 878,1190 905,1250 915,1225 915,1110 895,1105 878,1120")} fill="#c9f0bb" />
      <Areas data={WATER} fill="#aadaff" />
      <Lines data={CREEK} width={7} color="#aadaff" />
      <Lines data={PATHS} width={3.4} color="#ffffff" />
      <polyline points={str("A 35,1395 190,1392 212,1340 262,1275")} fill="none" stroke="#fff" strokeWidth={4} strokeDasharray="9 6" />
      <Lines data={NARROW} width={13} color="#ffffff" />
      <Lines data={roads} width={20} color="#ffffff" />
      <Lines data={[...GREEN, ...ORANGE]} width={24} color="#ffffff" />
      <Lines data={WIDE} width={34} color="#ffffff" />
      <circle cx={178} cy={503} r={33} fill="#e9edf0" stroke="#fff" strokeWidth={22} />
      <ellipse cx={1716} cy={2235} rx={27} ry={24} fill="none" stroke="#fff" strokeWidth={18} />
      <ellipse cx={2318} cy={1708} rx={17} ry={20} fill="#ecf1f4" stroke="#fff" strokeWidth={12} />

      <Areas
        data={[
          "F 1568,140 1400,262 1040,540 350,1060 140,1205 0,1285 -503,1548 -303,1548 0,1385 110,1325 345,1185 1040,650 1110,600 1568,270",
          "F 1408,300 1440,280 1475,330 1568,420 1568,505",
          "F 1548,1165 1430,1490 1402,1560 1458,1560 1548,1310",
        ]}
        fill="#ffdc4e"
      />
      <polygon points={str("F 1568,205 1448,283 1444,296 1568,222")} fill="#fff" />
      <polygon points={str("F 1415,310 1070,567 730,828 715,845 1080,576 1418,320")} fill="#fff" />
      <Lines data={["F 720,838 330,1112 0,1333"]} width={2.2} color="#fff" />
      <Lines data={["F 250,1168 0,1335 G 1190,1430 1105,1500"]} width={3} color="#fff" />
      <Lines data={["F 1548,1395 1510,1490"]} width={2} color="#ccc" />

      <Lines data={GREY} width={14} color="#a0a0a0" opacity={0.5} join="miter" />
      <g fill="#aab0b8">
        {ARROWS.map((a, i) => (
          <polygon key={i} points={str(a)} />
        ))}
      </g>

      <Areas data={RED} fill="#e15c64" outline="#857277" />
      <Areas data={BLUE} fill="#668ac1" outline="#59657a" />
      <Areas data={TAN} fill="#e8b160" outline="#94866d" />
      <polygon points={str("E 1355,998 1530,998 1530,1179 1355,1175")} fill="#e15c64" stroke="#857277" strokeWidth={3} />
      <polygon points={str("E 1433,1077 1478,1077 1478,1129 1433,1129")} fill="#ecf1f4" stroke="#857277" strokeWidth={3} />
      <Lines data={["E 463,446 686,446", "F 117,296 117,388", "F 117,429 117,524", "F 186,362 219,362", "F 186,458 219,458", "A 588,715 622,747", "A 740,838 775,856 819,858", "D 1463,333 1463,352", "D 1463,424 1463,442", "A 917,318 950,345"]} width={2.6} color="#59657a" />

      {LABELS.map(([text, src, size = 32, color = "#7c8286"], i) => {
        const p = toPoints(src);
        let len = 0;
        for (let k = 1; k < p.length; k++) len += Math.hypot(p[k][0] - p[k - 1][0], p[k][1] - p[k - 1][1]);
        return (
          <g key={i}>
            <path id={`street-${i}`} d={smooth(p)} fill="none" />
            <text fontFamily='Roboto, "Liberation Sans", sans-serif' fontSize={size} fill={color} stroke="#fff" strokeOpacity={0.8} strokeWidth={4.5} strokeLinejoin="round" paintOrder="stroke" fontWeight={500} textLength={len - 2}>
              <textPath href={`#street-${i}`}>{text}</textPath>
            </text>
          </g>
        );
      })}

      <Lines data={GREEN} width={14.5} color="#6cac00" opacity={0.6} join="miter" />
      <Lines data={ORANGE} width={14.5} color="#ffaa00" opacity={0.6} join="miter" />

      <rect x={2386} y={2057.500} width={54} height={43} rx={21} fill="#fff" stroke="#666" strokeWidth={3} />
      <text x={2413} y={2089} textAnchor="middle" fontFamily="Roboto, sans-serif" fontSize={28} fontWeight={500} fill="#444">49</text>

      <g fontFamily='"Liberation Sans", sans-serif' fontSize={55} fontWeight={700} fill="#000" stroke="#fff" strokeOpacity={0.6} strokeWidth={5} paintOrder="stroke">
        <text x={2241} y={675} textLength={249}>Bus 2404</text>
        <text x={713} y={2111} textLength={249}>Bus 2402</text>
      </g>
      <polygon points={str("C 540,380 617,453 490,458 535,422")} fill="#a0a0a0" stroke="#555" strokeWidth={3.5} />
      <polygon points={str("D 1295,885 1328,922 1387,916 1295,988")} fill="#60a150" stroke="#555" strokeWidth={3.5} />

      <svg x={1215} y={1070} width={119} height={164} viewBox="0 0 120 164">
        <path fillRule="evenodd" fill="#962d91" d={PIN} />
      </svg>

      <rect x={2568.600} y={2149.300} width={369} height={423.300} rx={76} fill="#284119" fillOpacity={0.2} />
      <path d={SIGN} fill="#8f8888" transform="translate(5 6)" />
      <path d={SIGN} fill="#979190" stroke="#000" strokeWidth={3} />

      <rect x={2610} y={2570} width={382} height={43} fill="#f7f7f7" fillOpacity={0.7} />
      <text x={2619} y={2605.600} textLength={356} fontFamily="Roboto, sans-serif" fontSize={34} fill="#444">Map data ©2018 Google</text>
      <rect x={13.600} y={436.100} width={2977.800} height={2176.600} fill="none" stroke="#666" strokeWidth={1.4} />
    </svg>
  );
}

/* ---------- Icons ---------- */

const PIN = "M60 0C27 0 0 27 0 60C0 103 42 134 60 164C78 134 120 103 120 60C120 27 93 0 60 0ZM60 29.500A30.300 30.300 0 1 1 60 90.100A30.300 30.300 0 1 1 60 29.500Z";

const Pin = ({ className }: { className: string }) => (
  <svg viewBox="0 0 120 164" className={className} fill="currentColor">
    <path fillRule="evenodd" d={PIN} />
  </svg>
);

const Bus = ({ className }: { className: string }) => (
  <svg viewBox="0 0 365 204" className={className} fill="currentColor">
    <path
      fillRule="evenodd"
      d="M17 0H322C338 0 349 10 351.500 24L362 82Q364.500 95 364.500 110V167Q364 178 350 182.700H331A41.300 41.300 0 1 0 248.600 182.700H98.900A41.300 41.300 0 1 0 16.300 182.700C6 180 0 174 0 167V17Q0 0 17 0ZM22 17Q16.300 17 16.300 23V83.300H82.500V17ZM98.900 17V83.300H166V17ZM182.400 17V83.300H249.500V17ZM265 17V83.300L290 108.300H347.500Q347.500 95 345 82L337 31Q334 17 320 17Z"
    />
    <circle cx="57.600" cy="174.500" r="29.300" />
    <circle cx="289.900" cy="174.500" r="29.300" />
  </svg>
);

const Chart = ({ className }: { className: string }) => (
  <svg viewBox="0 0 605 605" className={className} fill="#385723">
    <path d="M0 0H53.600V551H605V605H0ZM107 186H204.500V497H107ZM240 0H337.500V497H240ZM374 186H471.500V497H374ZM507.500 337.500H605V497H507.500Z" />
  </svg>
);

const Info = ({ className }: { className: string }) => (
  <svg viewBox="0 0 116 116" className={className}>
    <circle cx="58" cy="58" r="58" fill="#ed7d31" />
    <rect x="48" y="12" width="20" height="17" rx="3" fill="#fff" />
    <path d="M42 38H65Q68 38 68 41V79H75Q78 79 78 82V94Q78 97 75 97H42Q39.500 97 39.500 94V82Q39.500 79 42 79H48V55H42Q39.500 55 39.500 52V41Q39.500 38 42 38Z" fill="#fff" />
  </svg>
);

const House = ({ className }: { className: string }) => (
  <svg viewBox="0 0 135 146" className={className} fill="#00713b">
    <path d="M67.500 0L135 57V60H126.500V146H85V108H51.500V146H9V60H0V57Z" />
  </svg>
);

const Stopwatch = ({ className }: { className: string }) => (
  <svg viewBox="2263 2784 161 185" className={className} fill="#333">
    <circle cx="2343" cy="2888" r="72.500" fill="none" stroke="#333" strokeWidth="14" />
    <path d="M2315 2785H2371.500V2799.500H2350V2812H2335.600V2799.500H2315Z" />
    <path d="M2397 2826L2404 2818" stroke="#333" strokeWidth="14" strokeLinecap="round" />
    <circle cx="2343" cy="2840.600" r="4.800" />
    <circle cx="2389.800" cy="2885.500" r="4.800" />
    <circle cx="2295.700" cy="2885.500" r="4.800" />
    <circle cx="2343" cy="2934.600" r="4.800" />
    <path d="M2343 2853V2886.500L2366 2908.500" fill="none" stroke="#333" strokeWidth="9.500" />
  </svg>
);

const Puzzle = ({ className }: { className: string }) => (
  <svg viewBox="17 162 93 334" preserveAspectRatio="none" className={className} fill="#843c0c">
    <path d="M57 162L77 232Q80 240 84 225C87 212 84 200 88 186C91 178 96 179 99 185C104 194 106 220 104 236C102 250 99 249 95 253C90 258 88 272 91 282L110 350L96 402C91 400 89 385 89 370C87 348 80 343 75 355C70 365 68 385 70 405C72 418 77 415 81 420C86 430 86 445 84 452L69 496L50 427C48 420 44 425 43 435C41 455 41 468 37 476C33 480 28 478 25 468C20 450 21 425 25 412C28 406 32 410 35 403C38 392 38 380 36 370L17 307L32 253C37 255 38 270 39 285C41 305 48 312 53 303C58 295 59 265 57 250C55 236 51 241 48 236C43 228 42 215 44 206Z" />
  </svg>
);

const Headphones = ({ className }: { className: string }) => (
  <svg viewBox="0 0 341 305" className={className} fill="#385723">
    <path d="M0 251V170A170.500 170 0 0 1 341 170V251A13.400 13.400 0 0 1 314.200 251V246H297V284Q297 304.800 278 304.800H253Q233.800 304.800 233.800 284V191Q233.800 170 253 170H278Q297 170 297 191V228.600H314.200V170.500A143.700 143.500 0 0 0 26.800 170.500V228.600H46V191Q46 170 65 170H88Q107.300 170 107.300 191V284Q107.300 304.800 88 304.800H65Q46 304.800 46 284V246H26.800V251A13.400 13.400 0 0 1 0 251Z" />
  </svg>
);

const Gamepad = ({ className }: { className: string }) => (
  <svg viewBox="422.500 756 198 446" preserveAspectRatio="none" className={className} stroke="#000" strokeWidth="2">
    <path
      fill="#a5a5a5"
      vectorEffect="non-scaling-stroke"
      d="M468 757H478C488 757 490 780 496 790C502 801 512 804 521 804C530 804 540 801 546 790C553 780 556 757 567 757H577C584 757 588 780 591 800C605 890 620 1000 620 1105C620 1150 615 1200 605 1200H599C588 1200 582 1170 575 1145C567 1115 550 1090 521 1090C493 1090 477 1115 470 1145C462 1170 455 1200 444 1200H437C427 1200 423 1150 423 1105C423 1000 440 880 453 800C456 780 461 757 468 757Z"
    />
    <path fill="#fff" vectorEffect="non-scaling-stroke" d="M472 931V898Q472 882 477 882Q482 882 482 898V931H491Q496 931 496 947Q496 964 491 964H482V996Q482 1012 477 1012Q472 1012 472 996V964H464Q459 964 459 947Q459 931 464 931Z" />
    <g fill="#fff">
      <ellipse vectorEffect="non-scaling-stroke" cx="566" cy="899" rx="7.500" ry="24" />
      <ellipse vectorEffect="non-scaling-stroke" cx="566" cy="996" rx="7.500" ry="24" />
      <ellipse vectorEffect="non-scaling-stroke" cx="552" cy="947" rx="7.500" ry="24" />
      <ellipse vectorEffect="non-scaling-stroke" cx="580" cy="947" rx="7.500" ry="24" />
    </g>
  </svg>
);

const YouTube = ({ className }: { className: string }) => (
  <svg viewBox="1413 4056 874 293" className={className}>
    <g transform="translate(0 3650) scale(1.91645 .56441)">
      <path fill="#f00" d="M1050 721C1090 721 1130 723 1152 727C1180 731 1186 760 1190 850C1193 900 1193 1060 1190 1120C1186 1190 1183 1225 1150 1233C1110 1239 990 1239 965 1233C940 1225 932 1200 927 1120C923 1040 923 920 927 850C932 770 938 735 965 727C990 722 1030 721 1050 721Z" />
    </g>
    <g transform="scale(.7 1)" fontFamily="Roboto, sans-serif" fontWeight={700} strokeLinejoin="miter">
      <text x="2022 2172 2353" y="4289" fontSize="266" fill="#000" stroke="#000" strokeWidth="5">You</text>
      <text x="2592 2740 2899 3068" y="4291" fontSize="258" fill="#fff">Tube</text>
    </g>
  </svg>
);

const GoogleG = ({ className }: { className: string }) => (
  <svg viewBox="0 0 46.980 48" className={className}>
    <path fill="#EA4335" d="M24 9.500c3.540 0 6.710 1.220 9.210 3.600l6.850-6.850C35.900 2.380 30.470 0 24 0 14.620 0 6.510 5.380 2.560 13.220l7.980 6.190C12.430 13.720 17.740 9.500 24 9.500z" />
    <path fill="#4285F4" d="M46.980 24.550c0-1.570-.15-3.090-.38-4.550H24v9.020h12.940c-.58 2.960-2.260 5.480-4.780 7.180l7.730 6c4.510-4.180 7.090-10.360 7.090-17.650z" />
    <path fill="#FBBC05" d="M10.530 28.590c-.48-1.450-.76-2.990-.76-4.590s.27-3.140.76-4.590l-7.980-6.190C.92 16.460 0 20.120 0 24c0 3.880.92 7.540 2.560 10.780l7.970-6.190z" />
    <path fill="#34A853" d="M24 48c6.480 0 11.930-2.130 15.890-5.810l-7.730-6c-2.150 1.450-4.920 2.300-8.160 2.300-6.260 0-11.570-4.220-13.470-9.910l-7.980 6.190C6.510 42.620 14.620 48 24 48z" />
  </svg>
);

/* ---------- Page ---------- */

export default function App() {
  return (
    <div className="flex h-[4096px] w-[2714px] flex-col overflow-hidden border-[5px] border-[#707070] bg-white font-['Liberation_Sans',Arial,sans-serif] whitespace-nowrap text-[#707070]">
      <header className="flex h-[385px] shrink-0 justify-between border-b-2 border-[#707070] pr-[91px] pl-[39px]">
        <div>
          <div className="flex h-[191px] items-start">
            <Pin className="mt-[29px] h-[148px] w-[108px] text-[#962d91]" />
            <h1 className="mt-[33px] ml-[50px] text-[162.6px] leading-none tracking-[0.3px] [-webkit-text-stroke:2px_#707070]">Student Union East</h1>
          </div>
          <div className="flex items-start">
            <Info className="mt-[41px] ml-[2px] size-[105px]" />
            <p className="mt-[60px] ml-[52px] w-[789px] text-[83.9px] leading-none [-webkit-text-stroke:1px_#707070]">Flash Flood Warning</p>
            <Pin className="h-[148px] w-[108px] text-[#897661]" />
            <House className="mt-[16px] ml-[35px] h-[132px] w-[122px]" />
          </div>
        </div>
        <div className="mt-[103px] flex items-start gap-[84px]">
          <Bus className="h-[184px] w-[329.500px] text-[#70ad47]" />
          <Bus className="h-[184px] w-[329.500px] text-[#a5a5a5]" />
        </div>
      </header>

      <section className="h-[1972px] shrink-0 border-b-2 border-[#707070] px-[7px] pt-[3px]">
        <CampusMap />
      </section>

      <main className="flex h-[969px] shrink-0 border-b-2 border-[#707070]">
        <section className="w-[1272px] shrink-0 border-r border-[#333]">
          <div className="flex h-[293px] items-start pl-[24px]">
            <Chart className="mt-[33px] size-[149.500px]" />
            <h2 className="mt-[38px] ml-[35px] text-[162.6px] leading-none tracking-[0.5px] [-webkit-text-stroke:2px_#707070]">Bus Stats</h2>
          </div>
          <Chart className="ml-[277px] size-[547px]" />
        </section>
        <section className="text-[#8c8c8c]">
          <div className="flex h-[447.500px] items-start pt-[54px] pl-[80px]">
            <div className="w-[660px]">
              <h2 className="text-[162.6px] leading-none tracking-[0.3px] [-webkit-text-stroke:2px_#8c8c8c]">Next Bus</h2>
              <p className="mt-[9px] mr-[22px] text-right text-[86.4px] leading-none [-webkit-text-stroke:1.500px_#7b9b69]">arrives in</p>
            </div>
            <Stopwatch className="mt-[99px] ml-[27px] h-[167px] w-[145.400px]" />
          </div>
          <div className="flex h-[278px] items-start pl-[159px]">
            <Bus className="h-[149px] w-[266px] text-[#a2cc8a]" />
            <p className="mt-[1px] ml-[343px] text-[135.5px] leading-none [-webkit-text-stroke:1.500px_#8c8c8c]">2 mins</p>
          </div>
          <div className="flex items-start pl-[159px]">
            <Bus className="h-[149px] w-[266px] text-[#c4c4c4]" />
            <p className="mt-[1px] ml-[284px] text-[135.5px] leading-none [-webkit-text-stroke:1.500px_#8c8c8c]">15 mins</p>
          </div>
        </section>
      </main>

      <section className="flex-1">
        <div className="flex h-[324px] items-start pl-[24px]">
          <Puzzle className="mt-[48px] h-[170px] w-[161px]" />
          <h2 className="mt-[63px] ml-[14px] text-[162.6px] leading-none tracking-[0.2px] [-webkit-text-stroke:2px_#707070]">Entertainment</h2>
        </div>
        <div className="flex items-start pl-[267px]">
          <Headphones className="mt-[3px] h-[275px] w-[308px]" />
          <Gamepad className="mt-[27px] ml-[152px] h-[228px] w-[342px]" />
          <YouTube className="mt-[8px] ml-[202px] h-[264.600px] w-[789.400px]" />
          <GoogleG className="mt-[1px] ml-[103px] h-[280px] w-[274px]" />
        </div>
      </section>
    </div>
  );
}
